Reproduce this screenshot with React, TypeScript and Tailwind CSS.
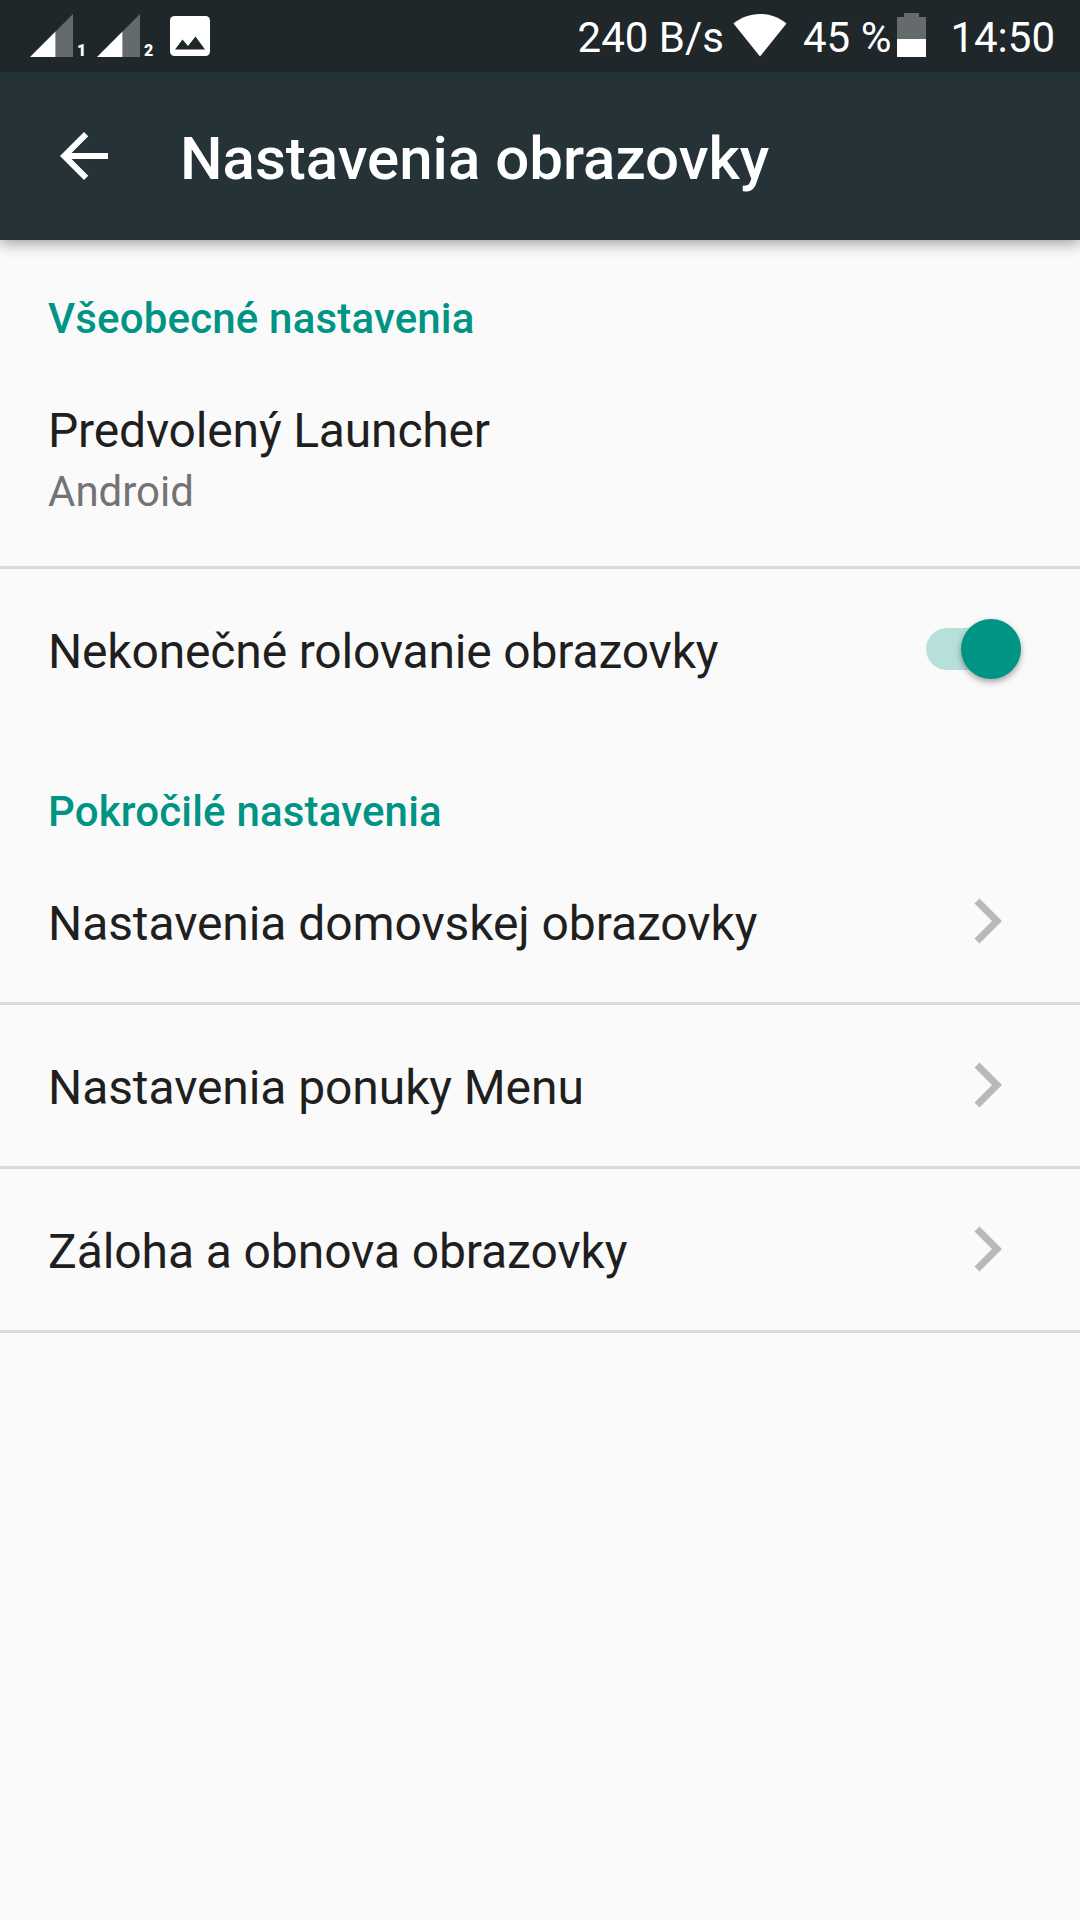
import { useState } from "react";

const menuItems = [
  "Nastavenia domovskej obrazovky",
  "Nastavenia ponuky Menu",
  "Záloha a obnova obrazovky",
];

function SignalIcon({ sim }: { sim: number }) {
  return (
    <div className="flex w-[67px] h-[58px] items-end">
      <svg width="43" height="43" viewBox="0 0 43 43" className="mb-px shrink-0">
        <path d="M25.5 17.5 43 0v43H25.5z" fill="#656b6d" />
        <path d="M0 43 25.5 17.5V43z" fill="#fff" />
      </svg>
      <span className="ml-[4px] mb-px text-[16px] leading-[13px] font-black text-white">
        {sim}
      </span>
    </div>
  );
}

function StatusBar() {
  return (
    <div className="flex h-[72px] items-start justify-between bg-[#20272a] pl-[30px] pr-[25px] text-[42px] leading-[50px] text-white">
      <div className="flex">
        <SignalIcon sim={1} />
        <SignalIcon sim={2} />
        <svg width="40" height="40" viewBox="0 0 40 40" className="mt-4 ml-[6px]">
          <rect width="40" height="40" rx="4.5" fill="#fff" />
          <path d="M5 33.5 12.5 23.5 18 30 25.5 20.5 35 33.5z" fill="#20272a" />
        </svg>
      </div>

      <div className="flex">
        <span className="mt-[13px]">240 B/s</span>
        <svg width="54" height="44" viewBox="0 0 54 44" className="mt-[13px] ml-[9px]">
          <path d="M27 43.5.5 10.5C8 4.500 17 1 27 1s19 3.500 26.500 9.500z" fill="#fff" />
        </svg>
        <span className="mt-[13px] ml-4">45 %</span>
        <svg width="29" height="44" viewBox="0 0 29 44" className="mt-[13px] ml-[6px]">
          <path d="M7 0h15v4h7v22H0V4h7z" fill="#656b6d" />
          <path d="M0 26h29v18H0z" fill="#fff" />
        </svg>
        <span className="mt-[13px] ml-6">14:50</span>
      </div>
    </div>
  );
}

function SectionTitle({ children }: { children: string }) {
  return (
    <h2 className="px-12 pt-[54px] text-[42px] leading-[50px] font-medium tracking-[0.17px] text-[#009485]">
      {children}
    </h2>
  );
}

function Chevron() {
  return (
    <svg width="30" height="48" viewBox="0 0 30 48" className="mr-[76px] mb-[2px]">
      <path d="M.5 6.500 5.500 1.500 28 24 5.500 46.500.5 41.500 18 24z" fill="#b9b9b9" />
    </svg>
  );
}

export default function App() {
  const [infinite, setInfinite] = useState(true);

  return (
    <main className="min-h-[1920px] w-[1080px] bg-[#fafafa] font-['Roboto',sans-serif] text-[#1f1f1f]">
      <StatusBar />

      <header className="relative flex h-[168px] items-center bg-[#253238] pl-12 text-white shadow-[0_3px_14px_rgba(0,0,0,0.4)] [clip-path:inset(0_0_-30px_0)]">
        <button type="button" aria-label="Späť">
          <svg width="72" height="72" viewBox="0 0 24 24" fill="currentColor">
            <path d="M20 11H7.830l5.590-5.590L12 4l-8 8 8 8 1.410-1.410L7.830 13H20v-2z" />
          </svg>
        </button>
        <h1 className="ml-[60px] pt-[5px] text-[60px] leading-[70px] font-medium">
          Nastavenia obrazovky
        </h1>
      </header>

      {/* General settings */}
      <section>
        <SectionTitle>Všeobecné nastavenia</SectionTitle>
        <div className="h-[225px] border-b-[3px] border-[#dadada] px-12 pt-[59px]">
          <p className="text-[48px] leading-[56px] tracking-[-0.18px]">Predvolený Launcher</p>
          <p className="mt-[8px] text-[42px] leading-[50px] text-[#737373]">Android</p>
        </div>
        <div className="flex h-[161px] items-center justify-between pl-12">
          <p className="pt-1 text-[48px] leading-[56px] tracking-[-0.17px]">
            Nekonečné rolovanie obrazovky
          </p>
          <button
            type="button"
            role="switch"
            aria-checked={infinite}
            onClick={() => setInfinite(!infinite)}
            className={`mr-[59px] mb-px flex h-[42px] w-[95px] items-center rounded-full ${
              infinite ? "justify-end bg-[#b7e0da]" : "justify-start bg-[#b9b9b9]"
            }`}
          >
            <span className="size-[60px] shrink-0 rounded-full bg-[#009485] shadow-[0_3px_6px_rgba(0,0,0,0.35)]" />
          </button>
        </div>
      </section>

      {/* Advanced settings */}
      <section>
        <div className="pt-[3px]">
          <SectionTitle>Pokročilé nastavenia</SectionTitle>
        </div>
        <ul className="pt-1">
          {menuItems.map((item) => (
            <li
              key={item}
              className="flex h-[164px] items-center justify-between border-b-[3px] border-[#dadada] pl-12"
            >
              <span className="pt-1 text-[48px] leading-[56px] tracking-[-0.09px]">{item}</span>
              <Chevron />
            </li>
          ))}
        </ul>
      </section>
    </main>
  );
}
